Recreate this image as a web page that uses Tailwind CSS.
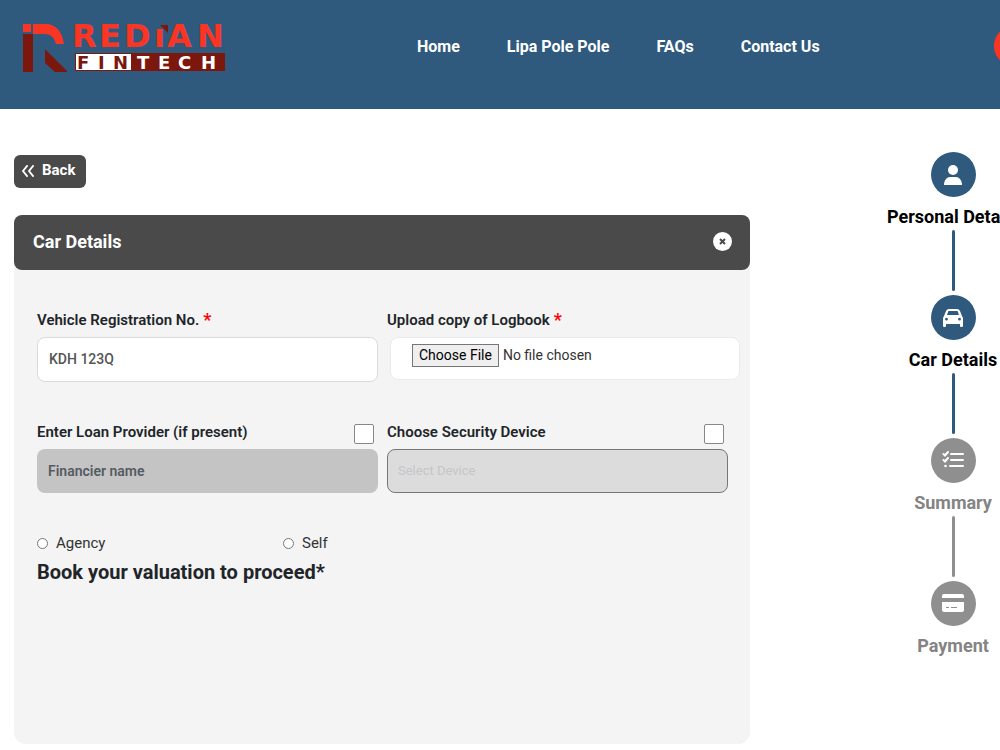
<!DOCTYPE html>
<html lang="en">
<head>
<meta charset="utf-8">
<meta name="viewport" content="width=device-width, initial-scale=1">
<title>Redian Fintech - Car Details</title>
<script src="https://cdn.jsdelivr.net/npm/@tailwindcss/browser@4"></script>
</head>
<body class="overflow-x-hidden bg-white font-['Roboto',sans-serif] text-[#212529]">
<header class="flex h-[109px] items-start overflow-hidden bg-[#2f5a7e] pl-5">
  <a href="#" aria-label="Redian Fintech" class="mt-2 shrink-0">
    <svg width="208" height="72" viewBox="20 8 208 72">
      <path fill="#fb3524" d="M23 24h8v8h-8zM33 24h12c11 0 17 7 19 20h-8c-2-7-5-10-12-10H33z"/>
      <path fill="#7c170d" d="M23 34h10v38H23zM45 49l22 22v1H55L45 63z"/>
      <g fill="#fb3524" font-family="DejaVu Sans" font-weight="bold" font-size="32">
        <text x="72 99 124 154 167 197" y="47">REDıAN</text>
      </g>
      <path fill="#7c170d" d="M160 25h8v8zM75 53h150v18H75z"/>
      <path fill="#fff" d="M76 54h55v16H76z"/>
      <g font-family="DejaVu Sans" font-weight="bold" font-size="18">
        <text x="77 98 113" y="69" fill="#7c170d">FIN</text>
        <text x="137 158 178 201" y="69" fill="#fff">TECH</text>
      </g>
    </svg>
  </a>
  <nav class="mt-[35px] ml-[189px] flex shrink-0 gap-[47px] text-base leading-6 font-bold text-white">
    <a href="#">Home</a>
    <a href="#">Lipa Pole Pole</a>
    <a href="#">FAQs</a>
    <a href="#">Contact Us</a>
  </nav>
  <a href="#" aria-label="Account" class="mt-[26px] ml-[174px] h-10 w-[120px] shrink-0 rounded-full bg-[#fb3524]"></a>
</header>

<main class="flex items-start pl-3.5">
  <section class="w-[736px] shrink-0 pt-[46px]">
    <button type="button" class="flex h-[33px] items-center gap-2 rounded-md bg-[#4a4a4a] pr-[11px] pb-0.5 pl-2 text-[15px] font-bold text-white">
      <svg width="12" height="12" viewBox="0 0 12 12" fill="none" stroke="currentColor" stroke-width="2" stroke-linecap="round" stroke-linejoin="round"><path d="M5 1 1 6l4 5M11 1 7 6l4 5"/></svg>
      Back
    </button>
    <div class="mt-[27px] min-h-[529px] rounded-xl bg-[#f4f4f4]">
      <div class="flex h-[55px] items-center justify-between rounded-lg bg-[#4a4a4a] pr-[18px] pb-0.5 pl-[19px]">
        <h1 class="text-lg font-bold text-white">Car Details</h1>
        <button type="button" aria-label="Close">
          <svg width="19" height="19" viewBox="0 0 19 19"><circle cx="9.500" cy="9.500" r="9.500" fill="#fff"/><path d="m7 7 5 5m0-5-5 5" stroke="#4a4a4a" stroke-width="2"/></svg>
        </button>
      </div>
      <form class="px-[23px] pt-[39px]">
        <div class="grid grid-cols-[341px_353px] gap-x-[9px] gap-y-[38px]">
          <div>
            <label for="reg" class="flex h-7 items-start pt-px text-[15px] leading-5 font-semibold">Vehicle Registration No.<span class="pl-1 text-lg leading-5 text-[#ff0000]">*</span></label>
            <input id="reg" type="text" value="KDH 123Q" class="h-[45px] w-full rounded-lg border border-[#d5dce1] bg-white px-[11px] pb-0.5 text-sm font-medium text-[#555]">
          </div>
          <div>
            <label for="logbook" class="flex h-7 items-start pt-px text-[15px] leading-5 font-semibold">Upload copy of Logbook<span class="pl-1 text-lg leading-5 text-[#ff0000]">*</span></label>
            <div class="ml-[3px] h-[43px] rounded-lg border border-[#e8ebef] bg-white pt-[6px] pl-[21px]">
              <input id="logbook" type="file" class="block w-full text-sm text-[#333] file:mr-1 file:h-[23px] file:border file:border-solid file:border-[#767676] file:bg-[#efefef] file:px-1.5 file:pb-0.5 file:text-sm file:text-black">
            </div>
          </div>
          <div>
            <div class="flex h-[29px] items-start justify-between pr-1">
              <label for="lender" class="pt-0.5 text-[15px] leading-5 font-semibold">Enter Loan Provider (if present)</label>
              <input type="checkbox" id="has-lender" aria-label="Loan provider present" class="mt-1 size-5 appearance-none rounded-xs border border-[#888] bg-white">
            </div>
            <input id="lender" type="text" placeholder="Financier name" disabled class="h-11 w-full rounded-lg bg-[#c4c4c4] px-[11px] text-sm font-semibold placeholder:text-[#555b62]">
          </div>
          <div class="w-[341px]">
            <div class="flex h-[29px] items-start justify-between pr-1">
              <label for="device" class="pt-0.5 text-[15px] leading-5 font-semibold">Choose Security Device</label>
              <input type="checkbox" id="has-device" aria-label="Use security device" class="mt-1 size-5 appearance-none rounded-xs border border-[#888] bg-white">
            </div>
            <select id="device" disabled class="h-11 w-full appearance-none rounded-lg border border-[#777] bg-[#dcdcdc] px-[10px] text-[13px] text-[#c4c6c9] opacity-100"><option>Select Device</option></select>
          </div>
        </div>
        <div class="mt-[38px] flex h-6 items-center text-[15px] text-[#333]">
          <label class="flex w-[246px] items-center gap-2"><input type="radio" name="valuation" class="size-[11px] appearance-none rounded-full border border-[#777] bg-white">Agency</label>
          <label class="flex items-center gap-2"><input type="radio" name="valuation" class="size-[11px] appearance-none rounded-full border border-[#777] bg-white">Self</label>
        </div>
        <h2 class="mt-[3px] text-xl leading-7 font-bold">Book your valuation to proceed*</h2>
      </form>
    </div>
  </section>

  <ol class="ml-[137px] flex shrink-0 flex-col items-center pt-[43px] text-lg leading-6 font-bold">
    <li class="flex flex-col items-center text-black">
      <span class="flex size-[45px] items-center justify-center rounded-full bg-[#2f5a7e]"><svg width="20" height="22" viewBox="0 0 20 22" fill="#fff"><circle cx="10" cy="6" r="5"/><path d="M1 21c0-5 3-8 6-8h6c3 0 6 3 6 8z"/></svg></span>
      <span class="mt-2 whitespace-nowrap">Personal Details</span>
      <span class="mt-px mb-1 h-[61px] w-[3px] rounded-full bg-[#2f5a7e]"></span>
    </li>
    <li class="flex flex-col items-center text-black">
      <span class="flex size-[45px] items-center justify-center rounded-full bg-[#2f5a7e]"><svg width="22" height="20" viewBox="0 0 22 20" fill="#fff"><path fill-rule="evenodd" d="m2 8 2-5q1-2 3-2h8q2 0 3 2l2 5q1 1 1 3v7q0 1-1 1h-1q-1 0-1-1v-2H4v2q0 1-1 1H2q-1 0-1-1v-7q0-2 1-3zm3-1h12l-1-3q0-1-1-1H7Q6 3 6 4zm-.5 2.800a1.400 1.400 0 1 0 0 2.800 1.400 1.400 0 0 0 0-2.800zm13 0a1.400 1.400 0 1 0 0 2.800 1.400 1.400 0 0 0 0-2.800z"/></svg></span>
      <span class="mt-2 whitespace-nowrap">Car Details</span>
      <span class="mt-px mb-1 h-[61px] w-[3px] rounded-full bg-[#2f5a7e]"></span>
    </li>
    <li class="flex flex-col items-center text-[#848484]">
      <span class="flex size-[45px] items-center justify-center rounded-full bg-[#8f8f8f]"><svg width="22" height="20" viewBox="0 0 22 20" fill="none" stroke="#fff" stroke-width="2" stroke-linecap="round"><path d="m1.500 3 1.500 1.500L6 1M1.500 9 3 10.500 6 7M9 3h12M9 9h12M8 15h13"/><circle cx="3.500" cy="15" r="1.300" fill="#fff" stroke="none"/></svg></span>
      <span class="mt-2 whitespace-nowrap">Summary</span>
      <span class="mt-px mb-1 h-[61px] w-[3px] rounded-full bg-[#8f8f8f]"></span>
    </li>
    <li class="flex flex-col items-center text-[#848484]">
      <span class="flex size-[45px] items-center justify-center rounded-full bg-[#8f8f8f]"><svg width="24" height="20" viewBox="0 0 24 20"><path fill="#fff" d="M1 4V2q0-2 2-2h18q2 0 2 2v2zM1 8h22v8q0 2-2 2H3q-2 0-2-2z"/><path d="M5 13.500h3m2 0h6" stroke="#8f8f8f"/></svg></span>
      <span class="mt-2 whitespace-nowrap">Payment</span>
    </li>
  </ol>
</main>
</body>
</html>
